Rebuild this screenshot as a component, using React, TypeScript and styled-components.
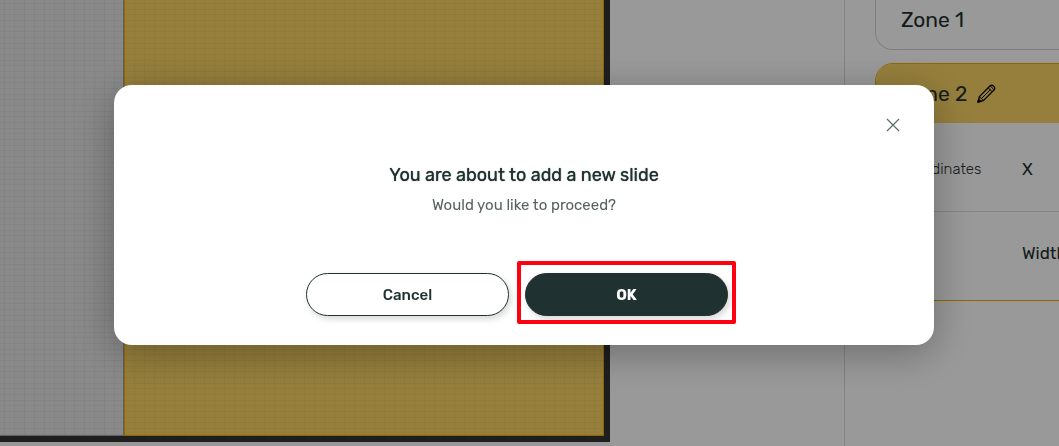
import React from "react";
import styled, { createGlobalStyle, css } from "styled-components";

const ink = "#1f3130";
const gold = "#f5ab00";
const gridLine = "rgba(0, 0, 0, 0.035)";

const GlobalStyle = createGlobalStyle`
  * { box-sizing: border-box; }
  html, body, #root { height: 100%; }
  body {
    margin: 0;
    overflow: hidden;
    background: #fff;
    color: ${ink};
    font-family: Rubik, Roboto, "Liberation Sans", sans-serif;
  }
  button { font: inherit; color: inherit; cursor: pointer; }
`;

const Page = styled.div`
  display: flex;
  height: 100%;
  overflow: hidden;
`;

const Workspace = styled.main`
  flex: 1;
  display: flex;
  min-width: 0;
  padding-bottom: 4px;
`;

const Board = styled.div`
  flex: 0 1 610px;
  display: flex;
  border: solid #333;
  border-width: 0 6px 6px 0;
`;

const grid = css`
  background-image:
    linear-gradient(to right, ${gridLine} 1px, transparent 1px),
    linear-gradient(
      to bottom,
      ${gridLine} 1px, transparent 1px 6px,
      ${gridLine} 6px 7px, transparent 7px 11px,
      ${gridLine} 11px 12px, transparent 12px
    );
  background-size: 10px 10px, 100% 17px;
`;

const BlankZone = styled.div`
  flex: 0 0 124px;
  background-color: #e5e5e5;
  border: solid #a0a0a0;
  border-width: 0 1px 1px 0;
  ${grid}
  background-position: 4px 0, 0 3px;
`;

const ActiveZone = styled.div`
  flex: 1;
  background-color: #fad466;
  border: solid ${gold};
  border-width: 0 1px 1px 1px;
  ${grid}
  background-position: 9px 0, 0 3px;
`;

const Sidebar = styled.aside`
  flex: 0 0 215px;
  border-left: 1px solid #dcdcdc;
  padding-left: 30px;
  overflow: hidden;
`;

const ZoneList = styled.div`
  display: flex;
  flex-direction: column;
  gap: 13px;
  width: 360px;
`;

const ZoneCard = styled.section<{ $active?: boolean }>`
  border: 1px solid ${(p) => (p.$active ? gold : "#d0d0d0")};
  border-radius: ${(p) => (p.$active ? "18px 18px 0 0" : "0 0 18px 18px")};
  border-top-width: ${(p) => (p.$active ? "1px" : "0")};
  overflow: hidden;
`;

const ZoneHeader = styled.h2<{ $active?: boolean }>`
  display: flex;
  align-items: center;
  gap: 10px;
  height: ${(p) => (p.$active ? "59px" : "49px")};
  margin: 0;
  padding: ${(p) => (p.$active ? "0 25px" : "0 25px 10px")};
  background: ${(p) => (p.$active ? "#fad466" : "#fff")};
  font-size: 21px;
  line-height: 28px;
  font-weight: 400;
`;

const IconButton = styled.button`
  display: flex;
  padding: 0;
  border: 0;
  background: none;
`;

const PropertyList = styled.div`
  font-weight: 300;
`;

const Property = styled.div`
  display: flex;
  align-items: center;
  height: 88px;
  padding: 4px 0 0 24px;
  & + & {
    height: 89px;
    padding: 0 0 6px 24px;
    border-top: 1px solid #dcdcdc;
  }
`;

const PropertyGroup = styled.span`
  flex: 0 0 122px;
  font-size: 15px;
`;

const PropertyName = styled.span`
  font-size: 17px;
  font-weight: 400;
`;

const Overlay = styled.div`
  position: fixed;
  inset: 0;
  display: flex;
  align-items: center;
  justify-content: center;
  padding: 0 11px 16px 0;
  background: rgba(0, 0, 0, 0.4);
`;

const Dialog = styled.div`
  position: relative;
  width: 820px;
  max-width: 90%;
  padding: 78px 24px 29px;
  border-radius: 18px;
  background: #fff;
  box-shadow: 0 8px 40px rgba(0, 0, 0, 0.3);
  text-align: center;
`;

const CloseButton = styled(IconButton)`
  position: absolute;
  top: 33px;
  right: 34px;
`;

const Title = styled.h1`
  margin: 0;
  font-size: 18px;
  line-height: 24px;
  font-weight: 400;
  text-shadow: 0 0 1px ${ink};
`;

const Message = styled.p`
  margin: 6px 0 0;
  font-size: 15px;
  line-height: 24px;
  font-weight: 400;
  color: #56635f;
`;

const Actions = styled.div`
  display: flex;
  justify-content: center;
  gap: 16px;
  margin-top: 56px;
  padding-right: 14px;
`;

const Highlight = styled.div`
  position: relative;
  &::after {
    content: "";
    position: absolute;
    inset: -12px -8px -8px;
    border: 4px solid #ff0010;
    border-radius: 2px;
    pointer-events: none;
  }
`;

const PillButton = styled.button<{ $primary?: boolean }>`
  display: block;
  width: 203px;
  height: 43px;
  padding: 0;
  border: 1px solid ${ink};
  border-radius: 22px;
  background: ${(p) => (p.$primary ? ink : "#fff")};
  color: ${(p) => (p.$primary ? "#fff" : ink)};
  box-shadow: 2px 3px 6px rgba(0, 0, 0, 0.16);
  font-size: 15px;
  font-weight: ${(p) => (p.$primary ? 700 : 500)};
`;

function PencilIcon() {
  return (
    <svg width="19" height="19" viewBox="0 0 19 19" fill="none" stroke="#000" strokeWidth="1.3" strokeLinejoin="round">
      <path d="M1 18 2.4 12.6 13.2 1.8Q14.8.4 16.6 2.2 18.6 4 17.2 5.8L6.4 16.6Z" />
      <path d="M2.4 12.6 6.4 16.6M5 14 13.6 5.4M11.2 3.8 15.2 7.8M13.2 1.8 17.2 5.8" strokeWidth="1" />
      <path d="M1 18 1.7 15.4 3.6 17.3Z" fill="#000" />
    </svg>
  );
}

function CloseIcon() {
  return (
    <svg width="14" height="14" viewBox="0 0 14 14" fill="none" stroke="#5b6a69" strokeWidth="1.2">
      <path d="M1 1 13 13M13 1 1 13" />
    </svg>
  );
}

export default function App() {
  return (
    <>
      <GlobalStyle />
      <Page>
        <Workspace>
          <Board>
            <BlankZone />
            <ActiveZone />
          </Board>
        </Workspace>
        <Sidebar>
          <ZoneList>
            <ZoneCard>
              <ZoneHeader>Zone 1</ZoneHeader>
            </ZoneCard>
            <ZoneCard $active>
              <ZoneHeader $active>
                Zone 2
                <IconButton aria-label="Rename zone">
                  <PencilIcon />
                </IconButton>
              </ZoneHeader>
              <PropertyList>
                <Property>
                  <PropertyGroup>Coordinates</PropertyGroup>
                  <PropertyName>X</PropertyName>
                </Property>
                <Property>
                  <PropertyGroup />
                  <PropertyName>Width</PropertyName>
                </Property>
              </PropertyList>
            </ZoneCard>
          </ZoneList>
        </Sidebar>
      </Page>
      <Overlay>
        <Dialog role="dialog" aria-modal="true" aria-labelledby="dialog-title">
          <CloseButton aria-label="Close">
            <CloseIcon />
          </CloseButton>
          <Title id="dialog-title">You are about to add a new slide</Title>
          <Message>Would you like to proceed?</Message>
          <Actions>
            <PillButton>Cancel</PillButton>
            <Highlight>
              <PillButton $primary>OK</PillButton>
            </Highlight>
          </Actions>
        </Dialog>
      </Overlay>
    </>
  );
}
